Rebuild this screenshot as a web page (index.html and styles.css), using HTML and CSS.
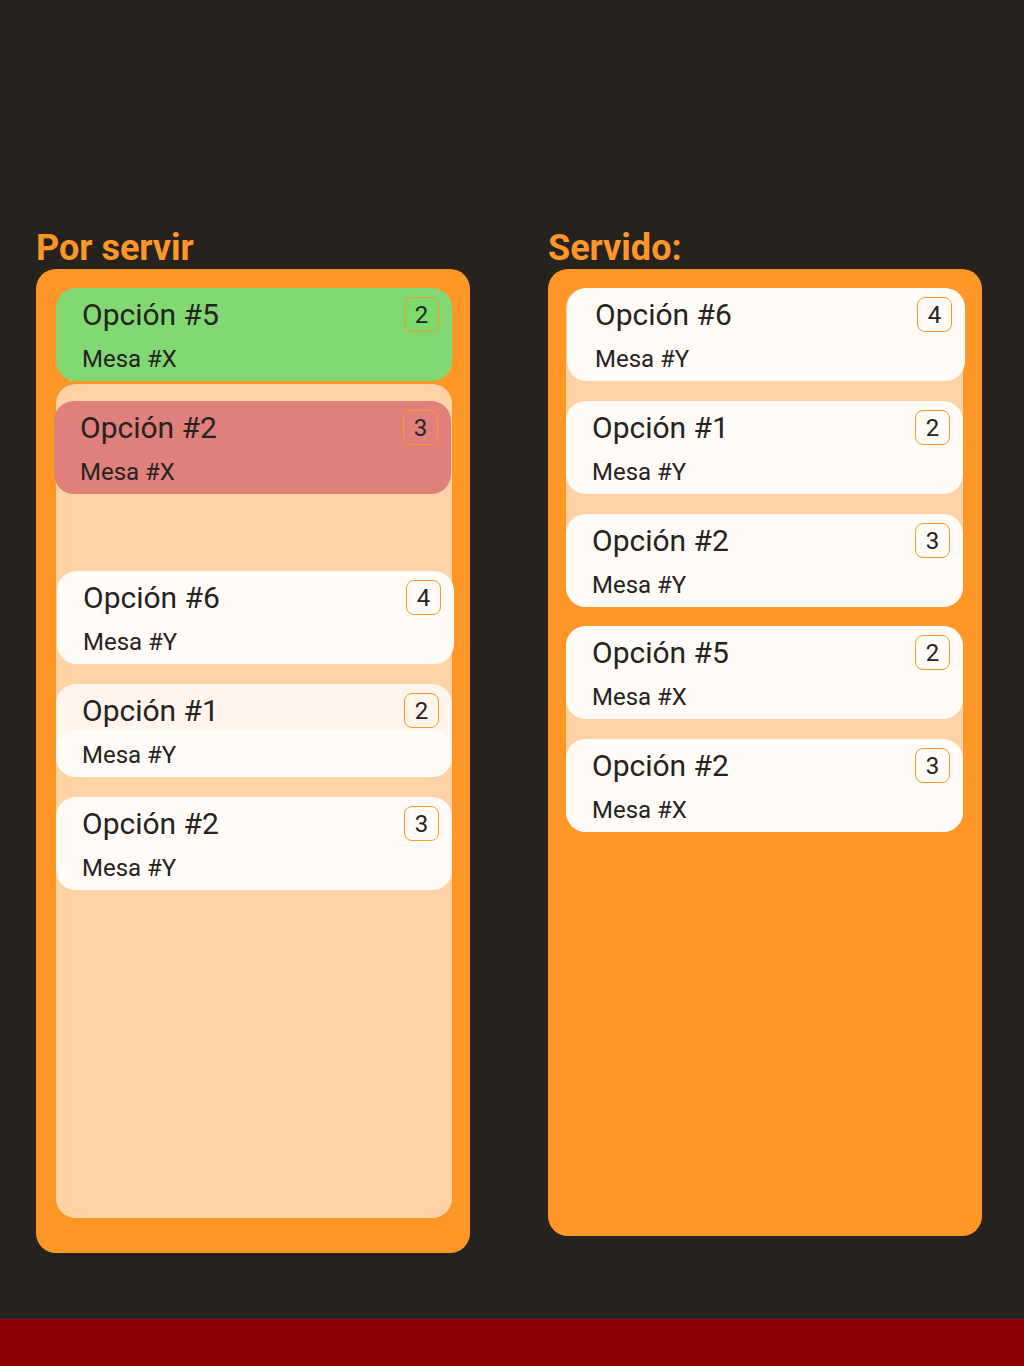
FILE: index.html
```html
<!DOCTYPE html>
<html lang="es">
<head>
<meta charset="utf-8">
<title>Pedidos</title>
<link rel="stylesheet" href="styles.css">
</head>
<body>
<main class="board">
  <section class="column">
    <h2 class="column-title">Por servir</h2>
    <div class="panel panel-left">
      <div class="card card-green">
        <div class="card-head"><span class="card-name">Opción #5</span><span class="badge">2</span></div>
        <div class="card-table">Mesa #X</div>
      </div>
      <div class="zone zone-left">
        <div class="card card-red">
          <div class="card-head"><span class="card-name">Opción #2</span><span class="badge">3</span></div>
          <div class="card-table">Mesa #X</div>
        </div>
        <div class="card card-drop">
          <div class="card-head"><span class="card-name">Opción #6</span><span class="badge">4</span></div>
          <div class="card-table">Mesa #Y</div>
        </div>
        <div class="card card-ghost">
          <div class="card-head"><span class="card-name">Opción #1</span><span class="badge">2</span></div>
          <div class="card-table">Mesa #Y</div>
        </div>
        <div class="card">
          <div class="card-head"><span class="card-name">Opción #2</span><span class="badge">3</span></div>
          <div class="card-table">Mesa #Y</div>
        </div>
      </div>
    </div>
  </section>
  <section class="column">
    <h2 class="column-title">Servido:</h2>
    <div class="panel panel-right">
      <div class="zone zone-right">
        <div class="card card-shift">
          <div class="card-head"><span class="card-name">Opción #6</span><span class="badge">4</span></div>
          <div class="card-table">Mesa #Y</div>
        </div>
        <div class="card">
          <div class="card-head"><span class="card-name">Opción #1</span><span class="badge">2</span></div>
          <div class="card-table">Mesa #Y</div>
        </div>
        <div class="card">
          <div class="card-head"><span class="card-name">Opción #2</span><span class="badge">3</span></div>
          <div class="card-table">Mesa #Y</div>
        </div>
      </div>
      <div class="zone zone-right">
        <div class="card">
          <div class="card-head"><span class="card-name">Opción #5</span><span class="badge">2</span></div>
          <div class="card-table">Mesa #X</div>
        </div>
        <div class="card">
          <div class="card-head"><span class="card-name">Opción #2</span><span class="badge">3</span></div>
          <div class="card-table">Mesa #X</div>
        </div>
      </div>
    </div>
  </section>
</main>
<footer class="bottom-bar"></footer>
</body>
</html>
```

FILE: styles.css
```css
* { box-sizing: border-box; }

html, body {
  margin: 0;
  padding: 0;
}

body {
  background: #26231f;
  font-family: Roboto, "Noto Sans", sans-serif;
  color: #26231f;
  min-height: 100vh;
  display: flex;
  flex-direction: column;
}

.board {
  display: flex;
  align-items: flex-start;
  gap: 78px;
  padding: 228px 42px 0 36px;
}

.column {
  width: 434px;
  display: flex;
  flex-direction: column;
}

.column-title {
  margin: 0 0 1px 0;
  font-size: 36px;
  line-height: 40px;
  font-weight: 700;
  color: #ff9628;
}

.panel {
  background: #ff9628;
  border-radius: 20px;
  display: flex;
  flex-direction: column;
}

.panel-left {
  height: 984px;
  padding: 19px 18px 0 20px;
}

.panel-right {
  height: 967px;
  padding: 19px 19px 0 18px;
  gap: 19px;
}

.zone {
  background: #ffd3a5;
  border-radius: 20px;
  display: flex;
  flex-direction: column;
  gap: 20px;
}

.zone-left {
  margin-top: 3px;
  height: 834px;
  padding-top: 17px;
}

.card {
  height: 93px;
  border-radius: 20px;
  background: #fffcf7;
  padding: 7px 13px 0 26px;
}

.card-shift {
  margin-left: 1px;
  margin-right: -2px;
  padding-left: 28px;
}

.card-head {
  display: flex;
  justify-content: space-between;
  align-items: flex-start;
}

.card-name {
  font-size: 30px;
  line-height: 40px;
}

.badge {
  margin-top: 2px;
  width: 35px;
  height: 35px;
  border: 1px solid #ff9628;
  border-radius: 8px;
  font-size: 24px;
  line-height: 35px;
  text-align: center;
}

.card-table {
  margin-top: 4px;
  font-size: 24px;
  line-height: 40px;
}

.card-green {
  background: #82d873;
}

.card-green .badge {
  background: #7ddb6e;
}

.card-red {
  background: #e0807b;
  margin-left: -2px;
  margin-right: 1px;
}

.card-drop {
  margin-top: 57px;
  margin-left: 1px;
  margin-right: -2px;
}

.card-ghost {
  background: #fff5ec;
}

.card-ghost .card-table {
  margin: -1px -13px 0 -26px;
  padding: 8px 0 0 26px;
  height: 47px;
  line-height: 34px;
  border-radius: 20px;
  background: #fffcf7;
}

.bottom-bar {
  margin-top: auto;
  height: 47px;
  background: #8b0000;
}
```
